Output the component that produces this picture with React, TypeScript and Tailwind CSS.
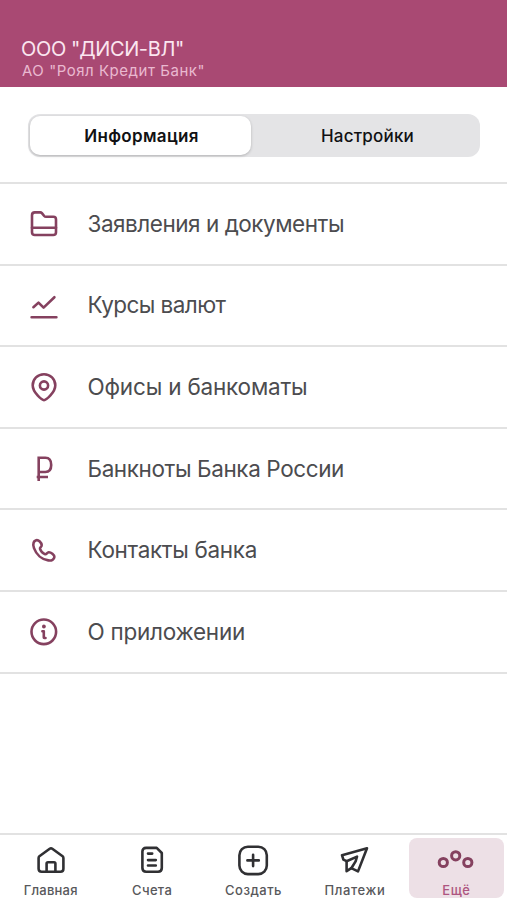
import type { ReactNode } from "react";
import clsx from "clsx";

interface IconProps {
  children: ReactNode;
  className?: string;
}

function Icon({ children, className }: IconProps) {
  return (
    <svg
      viewBox="0 0 32 32"
      fill="none"
      stroke="currentColor"
      strokeWidth={2.6}
      strokeLinecap="round"
      strokeLinejoin="round"
      className={clsx("size-8 shrink-0", className)}
    >
      {children}
    </svg>
  );
}

const menuItems = [
  {
    label: "Заявления и документы",
    width: 256.5,
    icon: (
      <>
        <path d="M4 7.2Q4 4.4 6.8 4.4H12.2Q13.2 4.4 13.9 5.2L16.2 8Q16.9 8.8 18 8.8H25.4Q28 8.8 28 11.4V24.2Q28 27 25.2 27H6.8Q4 27 4 24.2Z" />
        <path d="M4 19.8H28" />
      </>
    ),
  },
  {
    label: "Курсы валют",
    width: 138,
    icon: <path d="M5.4 18.2L10.5 13.6L15.6 18.6L26.4 8.2M3.6 28.2H28.4" />,
  },
  {
    label: "Офисы и банкоматы",
    width: 220,
    icon: (
      <>
        <path d="M16 29.2C14 29.2 4.7 21.6 4.7 14.3C4.7 8 9.7 3.3 16 3.3S27.3 8 27.3 14.3C27.3 21.6 18 29.2 16 29.2Z" />
        <circle cx="16" cy="14.5" r="4.1" />
      </>
    ),
  },
  {
    label: "Банкноты Банка России",
    width: 256.5,
    icon: (
      <path
        strokeLinecap="butt"
        strokeLinejoin="miter"
        d="M10.7 28V4.8H17.4Q23.2 4.8 23.2 12Q23.2 19 17.4 19H10.7M8.7 24H20"
      />
    ),
  },
  {
    label: "Контакты банка",
    width: 169.5,
    icon: (
      <path d="M8.2 6.2C5.2 7.3 4.8 10.7 6 14.1C8.2 20.4 13.8 25.3 20.3 26.4C23.7 27 26.2 25.5 26.4 22.9C26.5 21.2 22.9 18 20.7 18.2C18.9 18.4 18.6 20.8 16.8 20.1C14.7 19.3 12.7 16.9 12 14.9C11.5 13.4 13.8 12.9 13.7 11.1C13.6 8.8 10.5 5.5 8.2 6.2Z" />
    ),
  },
  {
    label: "О приложении",
    width: 157.5,
    icon: (
      <>
        <circle cx="15.8" cy="15.8" r="12.3" />
        <circle cx="15.9" cy="10.5" r="1.9" fill="currentColor" stroke="none" />
        <path d="M14.4 15.2H15.8V21.6Q15.8 22 16.3 22H17.5" />
      </>
    ),
  },
];

const tabs = [
  {
    label: "Главная",
    width: 54,
    icon: (
      <>
        <path d="M3.6 13Q3.6 12 4.4 11.3L14.7 3.8Q16 2.9 17.3 3.8L27.6 11.3Q28.4 12 28.4 13V23.8Q28.4 26.8 25.4 26.8H6.6Q3.6 26.8 3.6 23.8Z" />
        <path d="M11.6 26.6V18.6Q11.6 17.2 13 17.2H19Q20.4 17.2 20.4 18.6V26.6" />
      </>
    ),
  },
  {
    label: "Счета",
    width: 40,
    icon: (
      <>
        <path d="M6.4 6.6Q6.4 2.9 10.1 2.9H20.7L25.8 8V23Q25.8 26.7 22.1 26.7H10.1Q6.4 26.7 6.4 23Z" />
        <path d="M12 8.6H16.2M12 15.1H19.8M12 20.5H19.8" />
      </>
    ),
  },
  {
    label: "Создать",
    width: 57,
    icon: (
      <>
        <rect x="2.4" y="1.7" width="27.4" height="27.4" rx="8.5" />
        <path d="M16.1 9.7V21.1M10.4 15.4H21.8" />
      </>
    ),
  },
  {
    label: "Платежи",
    width: 61,
    icon: (
      <>
        <path d="M28 3.3L3 10.2L4.4 14.6L7.6 16.2V26.2L12.3 23.2L19 26.4Z" />
        <path d="M7.6 16.2L18 11.6L16.6 16.4L12.3 23.2" />
      </>
    ),
  },
  {
    label: "Ещё",
    width: 28,
    active: true,
    icon: (
      <>
        <circle cx="3.3" cy="17.5" r="4.1" strokeWidth="3" />
        <circle cx="15.7" cy="10.8" r="4.1" strokeWidth="3" />
        <circle cx="27.8" cy="17.5" r="4.1" strokeWidth="3" />
      </>
    ),
  },
];

interface FitTextProps {
  text: string;
  width: number;
  className?: string;
}

// Spreads a label over a known width so it stays stable across fonts
function FitText({ text, width, className }: FitTextProps) {
  return (
    <span
      className={clsx("block whitespace-nowrap", className)}
      ref={(el) => {
        if (!el) return;
        el.style.letterSpacing = "0px";
        const range = document.createRange();
        range.selectNodeContents(el);
        const natural = range.getBoundingClientRect().width;
        const spacing = (width - natural) / text.length;
        el.style.letterSpacing = `${spacing}px`;
      }}
    >
      {text}
    </span>
  );
}

export default function App() {
  return (
    <div className="flex h-[900px] w-[507px] flex-col overflow-hidden bg-white font-['Inter','Liberation_Sans',sans-serif]">
      <header className="h-[87px] shrink-0 bg-[#a94973] pl-[21px] pt-[37px] text-[#fbe6f0]">
        <FitText
          text={'ООО "ДИСИ-ВЛ"'}
          width={163}
          className="text-[20px] leading-6"
        />
        <FitText
          text={'АО "Роял Кредит Банк"'}
          width={183}
          className="pl-px text-[15px] leading-[19px] text-[#e9b9d0]"
        />
      </header>

      <div className="h-[95px] shrink-0 pl-7 pr-[27px] pt-[27px]">
        <div className="grid h-[43px] grid-cols-[221px_1fr] rounded-xl bg-[#e4e4e6] p-0.5 text-[17px] font-semibold text-[#111113]">
          <button className="flex items-center justify-center rounded-[10px] bg-white pl-0.5 pt-0.5 shadow-[0_1px_3px_rgba(0,0,0,0.22)]">
            <FitText text="Информация" width={114.5} />
          </button>
          <button className="flex items-center justify-center pl-1.5 pt-0.5 font-medium">
            <FitText text="Настройки" width={93} />
          </button>
        </div>
      </div>

      <ul className="shrink-0 border-t-2 border-[#e2e2e2]">
        {menuItems.map((item) => (
          <li
            key={item.label}
            className="flex h-[81.6px] items-center gap-[27.5px] border-b-2 border-[#e2e2e2] pl-7 text-[#4c4c4f]"
          >
            <Icon className="text-[#85415f]">{item.icon}</Icon>
            <FitText
              text={item.label}
              width={item.width}
              className="text-[22.5px] leading-7"
            />
          </li>
        ))}
      </ul>

      <nav className="mt-auto grid h-[67px] shrink-0 grid-cols-5 border-t-2 border-[#e2e2e2]">
        {tabs.map((tab) => (
          <button
            key={tab.label}
            className={clsx(
              "flex flex-col items-center",
              tab.active
                ? "mx-[3px] mb-[2px] mt-[3px] rounded-lg bg-[#ede0e6] pt-[7px] text-[#85415f]"
                : "pt-2.5 text-[#303033]",
            )}
          >
            <Icon className="overflow-visible">{tab.icon}</Icon>
            <FitText
              text={tab.label}
              width={tab.width}
              className={clsx(
                "mt-[5px] text-[13px] leading-4 font-medium",
                tab.active ? "text-[#ae5580]" : "text-[#58585b]",
              )}
            />
          </button>
        ))}
      </nav>
    </div>
  );
}
